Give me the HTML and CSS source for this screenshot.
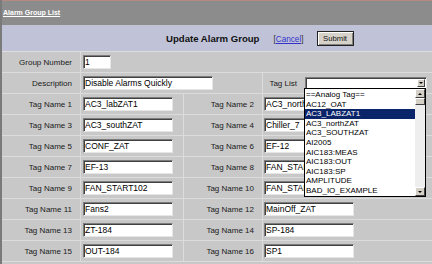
FILE: index.html
```html
<!DOCTYPE html>
<html lang="en">
<head>
  <meta charset="UTF-8" />
  <title>Update Alarm Group</title>
  <link rel="stylesheet" href="styles.css">
</head>
<body>
  <div class="page">
    <div class="topbar"><a href="#">Alarm Group List</a></div>

    <div class="titlebar">
      <span class="title">Update Alarm Group</span>
      <span class="cancel">[<a href="#">Cancel</a>]</span>
      <button type="submit">Submit</button>
    </div>

    <form class="form">
      <div class="row">
        <div class="cell label">Group Number</div>
        <div class="cell span3"><input class="short" type="text" value="1" /></div>
      </div>

      <div class="row">
        <div class="cell label">Description</div>
        <div class="cell span2"><input class="wide" type="text" value="Disable Alarms Quickly" /></div>
        <div class="cell last">
          <span class="taglist-label">Tag List</span>
          <div class="select"><span class="arrow-btn"><i class="tri down"></i></span></div>
        </div>
      </div>

      <div class="row">
        <div class="cell label">Tag Name 1</div>
        <div class="cell"><input type="text" value="AC3_labZAT1" /></div>
        <div class="cell label">Tag Name 2</div>
        <div class="cell last"><input type="text" value="AC3_northZAT" /></div>
      </div>
      <div class="row">
        <div class="cell label">Tag Name 3</div>
        <div class="cell"><input type="text" value="AC3_southZAT" /></div>
        <div class="cell label">Tag Name 4</div>
        <div class="cell last"><input type="text" value="Chiller_7" /></div>
      </div>
      <div class="row">
        <div class="cell label">Tag Name 5</div>
        <div class="cell"><input type="text" value="CONF_ZAT" /></div>
        <div class="cell label">Tag Name 6</div>
        <div class="cell last"><input type="text" value="EF-12" /></div>
      </div>
      <div class="row">
        <div class="cell label">Tag Name 7</div>
        <div class="cell"><input type="text" value="EF-13" /></div>
        <div class="cell label">Tag Name 8</div>
        <div class="cell last"><input type="text" value="FAN_START101" /></div>
      </div>
      <div class="row">
        <div class="cell label">Tag Name 9</div>
        <div class="cell"><input type="text" value="FAN_START102" /></div>
        <div class="cell label">Tag Name 10</div>
        <div class="cell last"><input type="text" value="FAN_START103" /></div>
      </div>
      <div class="row">
        <div class="cell label">Tag Name 11</div>
        <div class="cell"><input type="text" value="Fans2" /></div>
        <div class="cell label">Tag Name 12</div>
        <div class="cell last"><input type="text" value="MainOff_ZAT" /></div>
      </div>
      <div class="row">
        <div class="cell label">Tag Name 13</div>
        <div class="cell"><input type="text" value="ZT-184" /></div>
        <div class="cell label">Tag Name 14</div>
        <div class="cell last"><input type="text" value="SP-184" /></div>
      </div>
      <div class="row">
        <div class="cell label">Tag Name 15</div>
        <div class="cell"><input type="text" value="OUT-184" /></div>
        <div class="cell label">Tag Name 16</div>
        <div class="cell last"><input type="text" value="SP1" /></div>
      </div>

      <div class="dropdown">
        <ul class="options">
          <li>==Analog Tag==</li>
          <li>AC12_OAT</li>
          <li class="selected">AC3_LABZAT1</li>
          <li>AC3_northZAT</li>
          <li>AC3_SOUTHZAT</li>
          <li>AI2005</li>
          <li>AIC183:MEAS</li>
          <li>AIC183:OUT</li>
          <li>AIC183:SP</li>
          <li>AMPLITUDE</li>
          <li>BAD_IO_EXAMPLE</li>
        </ul>
        <div class="scrollbar">
          <span class="sb-btn"><i class="tri up"></i></span>
          <span class="sb-thumb"></span>
          <span class="sb-track"></span>
          <span class="sb-btn"><i class="tri down"></i></span>
        </div>
      </div>
    </form>
  </div>
</body>
</html>
```

FILE: styles.css
```css
* { margin: 0; padding: 0; box-sizing: border-box; }

html, body {
  width: 100%;
  height: 100%;
  overflow: hidden;
  background-color: #c8c8c8;
  font-family: 'Liberation Sans', Arial, sans-serif;
  color: #111;
}

.page {
  position: relative;
  min-height: 100%;
  border-left: 2px solid #7a7a7a;
}

/* top header */
.topbar {
  height: 25px;
  border-top: 1px solid #b48a82;
  background-color: #8c8c8c;
  padding: 4px 0 0 1px;
  line-height: 9px;
}

.topbar a {
  color: #fff;
  font-size: 7px;
  font-weight: bold;
  text-decoration: underline;
}

/* title */
.titlebar {
  display: flex;
  align-items: center;
  height: 27px;
  background-color: #c0c3d8;
  border-bottom: 1px solid #dedede;
  padding-top: 1px;
}

.title {
  margin-left: 164px;
  font-size: 9.6px;
  font-weight: bold;
  color: #111;
}

.cancel {
  margin-left: 14px;
  font-size: 8.2px;
  color: #333;
  padding-top: 2px;
}

.cancel a {
  color: #3333cc;
  text-decoration: underline;
}

button {
  margin-left: 13px;
  width: 37px;
  height: 15px;
  font-family: 'Liberation Sans', Arial, sans-serif;
  font-size: 7.7px;
  color: #111;
  background-color: #d6d2ca;
  border: 1px solid #222;
  box-shadow: inset 1px 1px #fff, inset -1px -1px #808080;
}

/* form rows */
.row {
  display: grid;
  grid-template-columns: 79px 103px 79px 1fr;
  height: 21px;
  border-bottom: 1px solid #dcdcdc;
}

.cell {
  display: flex;
  align-items: center;
  padding-left: 2px;
  border-right: 1px solid #dcdcdc;
  font-size: 8px;
}

.cell.last { border-right: none; padding-left: 1px; }
.cell.span2 { grid-column: span 2; }
.cell.span3 { grid-column: span 3; border-right: none; }

.cell.label {
  justify-content: flex-end;
  padding: 0 8px 0 0;
  color: #1a1a1a;
}

input[type="text"] {
  width: 90px;
  height: 14px;
  padding: 0 1px;
  font-family: 'Liberation Sans', Arial, sans-serif;
  font-size: 8.5px;
  color: #000;
  background-color: #fff;
  border: 1px solid;
  border-color: #7c7c7c #e6e6e6 #e6e6e6 #7c7c7c;
  box-shadow: inset 1px 1px #404040;
  outline: none;
}

input.short { width: 28px; }
input.wide { width: 130px; }

.taglist-label {
  width: 41px;
  padding-right: 8px;
  text-align: right;
  color: #1a1a1a;
}

.select {
  position: relative;
  width: 122px;
  height: 12px;
  margin-top: -1px;
  background-color: #fff;
  border: 1px solid;
  border-color: #7c7c7c #e6e6e6 #e6e6e6 #7c7c7c;
  box-shadow: inset 1px 1px #404040;
}

.arrow-btn {
  position: absolute;
  right: 1px;
  top: 1px;
  width: 8px;
  height: 8px;
  display: flex;
  align-items: center;
  justify-content: center;
  background-color: #d4d0c8;
  border: 1px solid;
  border-color: #fff #404040 #404040 #fff;
}

.tri {
  width: 0;
  height: 0;
  border-left: 2px solid transparent;
  border-right: 2px solid transparent;
}

.tri.down { border-top: 2px solid #000; }
.tri.up { border-bottom: 2px solid #000; }

/* open list */
.dropdown {
  position: absolute;
  left: 302px;
  top: 88px;
  width: 122px;
  height: 109px;
  display: flex;
  background-color: #fff;
  border: 1px solid #000;
}

.options {
  list-style: none;
  flex: 1;
  padding-top: 1px;
  font-size: 8px;
  line-height: 9.6px;
  color: #000;
  overflow: hidden;
}

.options li {
  padding-left: 1px;
  white-space: nowrap;
}

.options li.selected {
  background-color: #0a246a;
  color: #fff;
}

.scrollbar {
  width: 10px;
  display: flex;
  flex-direction: column;
  background-color: #eeeeee;
}

.sb-btn,
.sb-thumb {
  display: flex;
  align-items: center;
  justify-content: center;
  height: 9px;
  background-color: #d4d0c8;
  border: 1px solid;
  border-color: #fff #404040 #404040 #fff;
}

.sb-thumb { height: 7px; }
.sb-track { flex: 1; }
```
